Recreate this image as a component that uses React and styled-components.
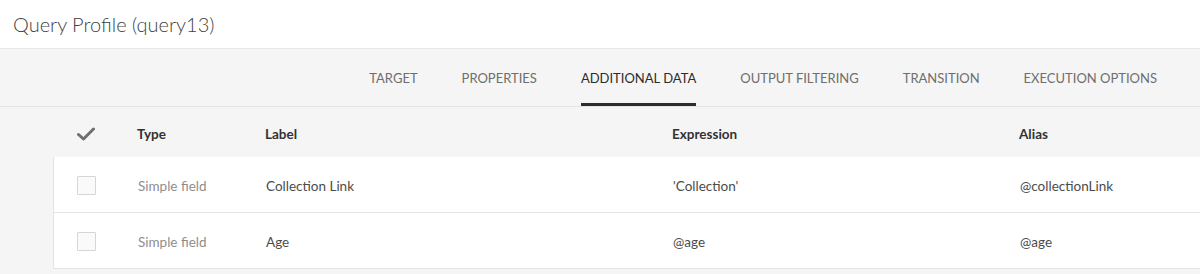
import React from 'react'
import styled, { createGlobalStyle } from 'styled-components'

const Global = createGlobalStyle`
  html, body { margin: 0; padding: 0; background: #f5f5f5; }
  body { font-family: Lato, "Open Sans", sans-serif; }
`

const TitleBar = styled.div`
  height: 48px;
  background: #fff;
  border-bottom: 1px solid #e6e6e6;
  display: flex;
  align-items: center;
  padding-left: 13px;
  font-size: 20px;
  font-weight: 300;
  color: #3f3f3f;
`

const Tabs = styled.div`
  height: 57px;
  display: flex;
  justify-content: flex-end;
  gap: 44px;
  padding-right: 43px;
  border-bottom: 1px solid #e3e3e3;
`

const Tab = styled.div`
  display: flex;
  align-items: center;
  font-size: 13px;
  color: ${p => (p.active ? '#2c2c2c' : '#6e6e6e')};
  border-bottom: 3px solid ${p => (p.active ? '#2c2c2c' : 'transparent')};
  box-sizing: border-box;
  padding-top: 4px;
`

const Table = styled.div`
  margin-left: 53px;
`

const Row = styled.div`
  display: grid;
  grid-template-columns: 84px 128px 407px 347px 1fr;
  align-items: center;
  height: ${p => (p.head ? '50px' : '55px')};
  background: ${p => (p.head ? 'transparent' : '#fff')};
  border-bottom: ${p => (p.head ? 'none' : '1px solid #e4e4e4')};
  border-left: ${p => (p.head ? 'none' : '1px solid #e4e4e4')};
  font-size: 13.5px;
  color: #4b4b4b;
`

const HeadCell = styled.div`
  font-weight: 700;
  color: #323232;
  padding-top: 4px;
`

const CheckCell = styled.div`
  padding-left: ${p => (p.head ? '24px' : '23px')};
  padding-top: ${p => (p.head ? '4px' : '2px')};
  display: flex;
  align-items: center;
`

const Box = styled.div`
  width: 17px;
  height: 17px;
  border: 1px solid #d6d6d6;
  border-radius: 1px;
  background: #fafafa;
`

const Cell = styled.div`
  padding-top: 2px;
  color: ${p => (p.muted ? '#8e8e8e' : '#4b4b4b')};
`

const rows = [
  { type: 'Simple field', label: 'Collection Link', expr: "'Collection'", alias: '@collectionLink' },
  { type: 'Simple field', label: 'Age', expr: '@age', alias: '@age' },
]

const tabs = ['TARGET', 'PROPERTIES', 'ADDITIONAL DATA', 'OUTPUT FILTERING', 'TRANSITION', 'EXECUTION OPTIONS']

export default function App() {
  return (
    <>
      <Global />
      <TitleBar>Query Profile (query13)</TitleBar>
      <Tabs>
        {tabs.map(t => (
          <Tab key={t} active={t === 'ADDITIONAL DATA'}>{t}</Tab>
        ))}
      </Tabs>
      <Table>
        <Row head>
          <CheckCell head>
            <svg width="18" height="14" viewBox="0 0 18 14">
              <path d="M1.5 7.5 L6.5 12 L16.5 2" fill="none" stroke="#6e6e6e" strokeWidth="3" strokeLinecap="round" strokeLinejoin="round" />
            </svg>
          </CheckCell>
          <HeadCell>Type</HeadCell>
          <HeadCell>Label</HeadCell>
          <HeadCell>Expression</HeadCell>
          <HeadCell>Alias</HeadCell>
        </Row>
        {rows.map((r, i) => (
          <Row key={i}>
            <CheckCell><Box /></CheckCell>
            <Cell muted>{r.type}</Cell>
            <Cell>{r.label}</Cell>
            <Cell>{r.expr}</Cell>
            <Cell>{r.alias}</Cell>
          </Row>
        ))}
      </Table>
    </>
  )
}
